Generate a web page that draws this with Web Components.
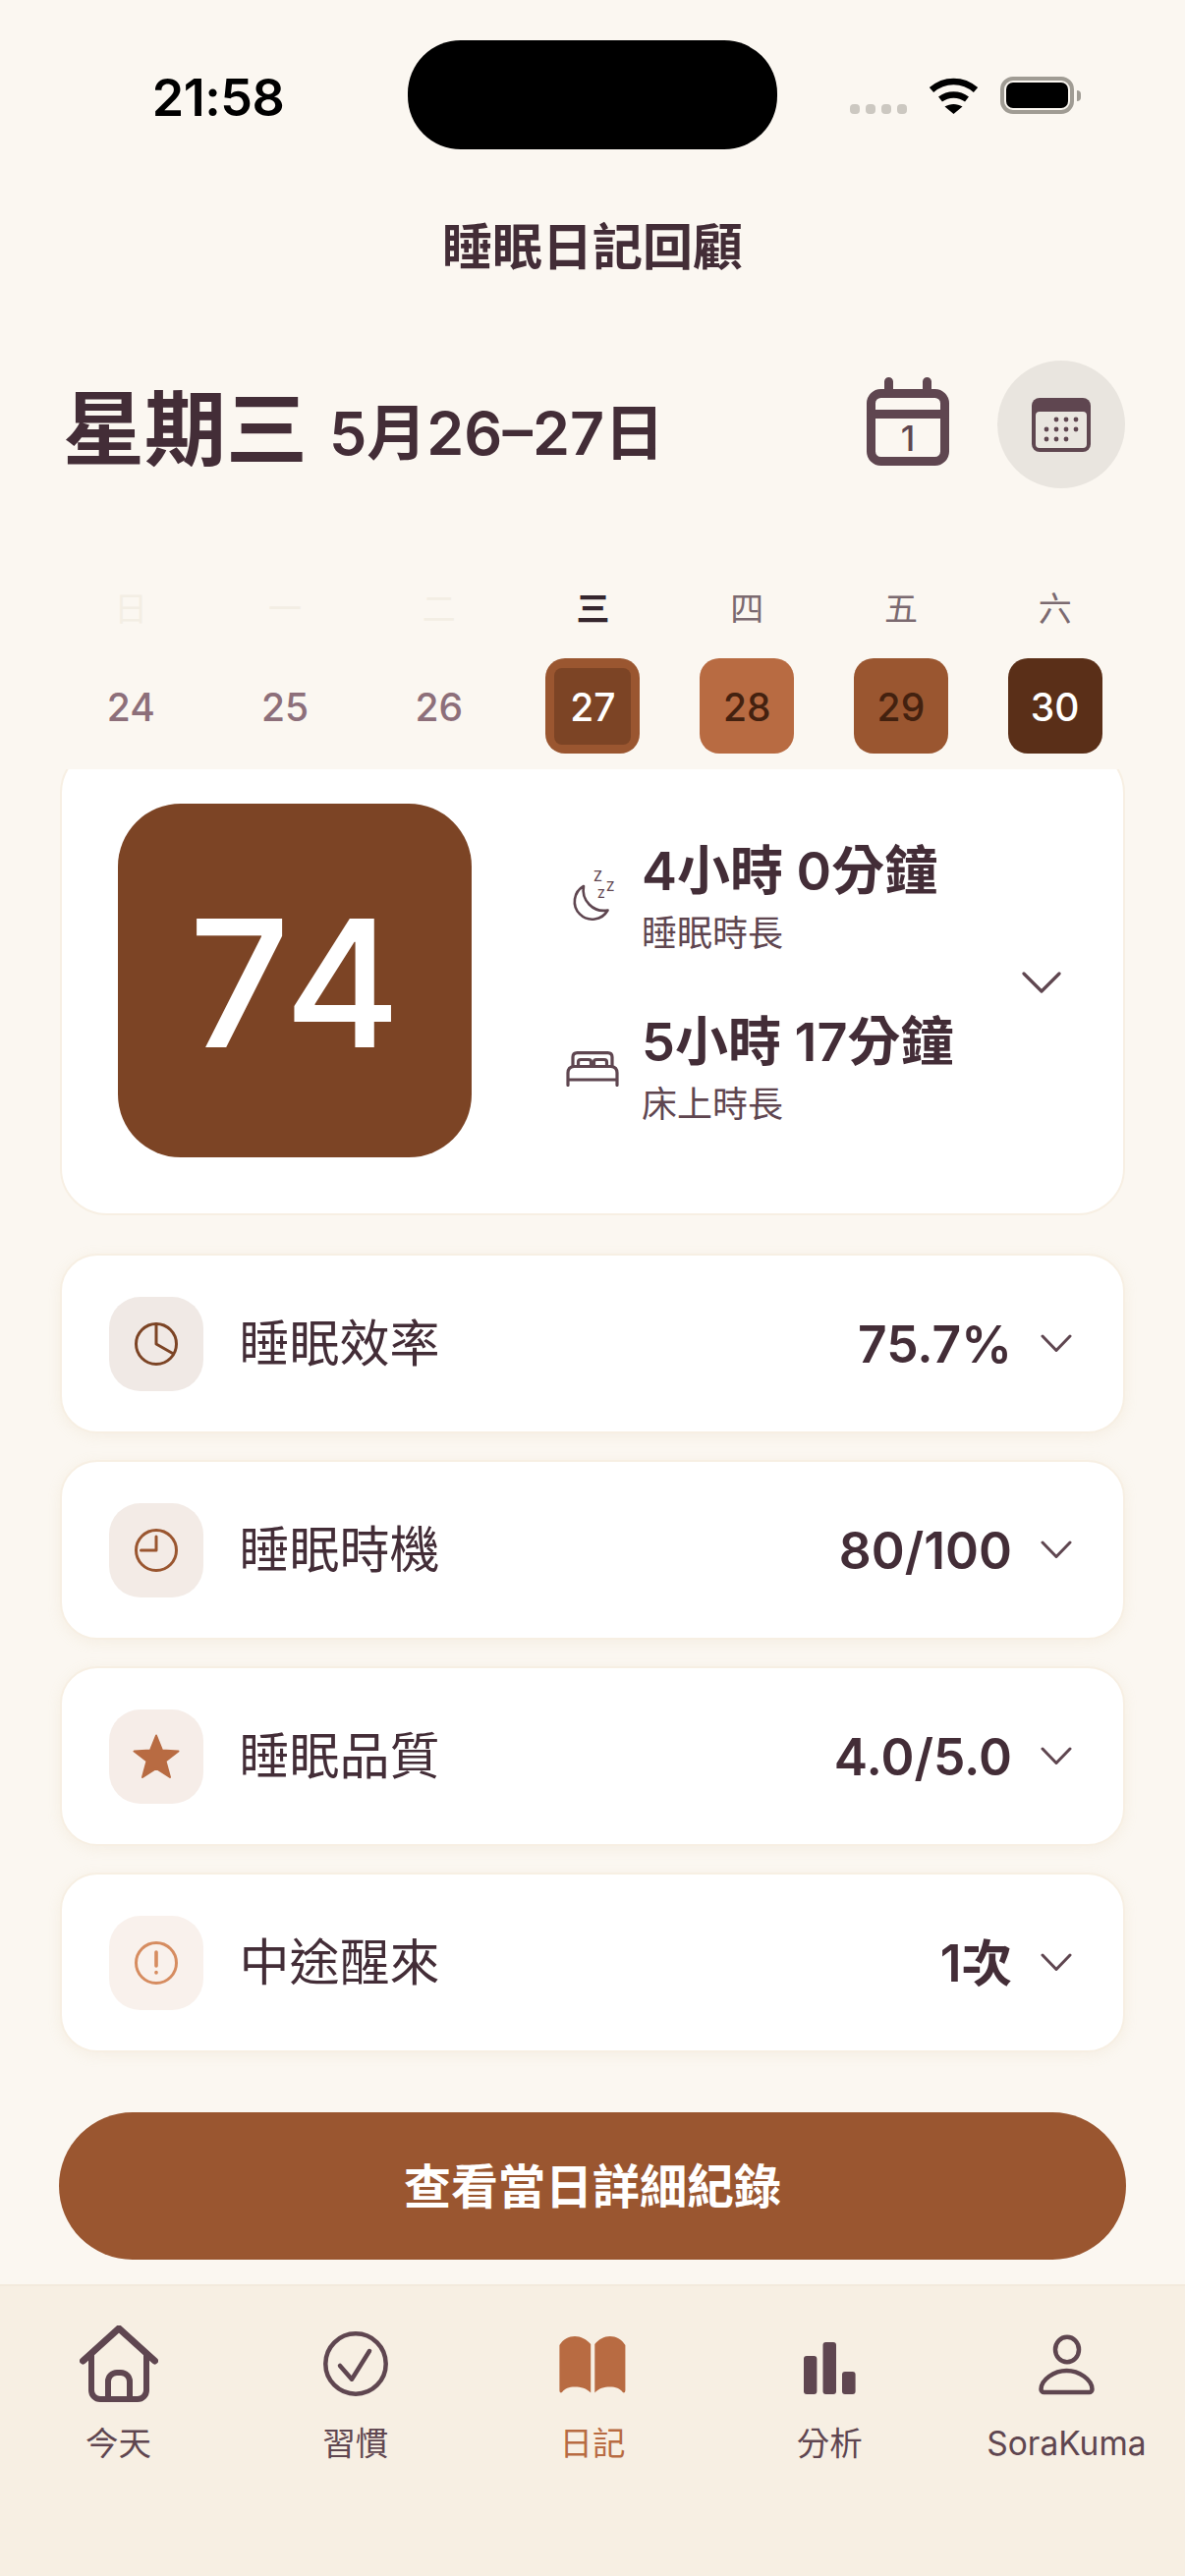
<!DOCTYPE html>
<html lang="zh-Hant">
<head>
<meta charset="utf-8">
<title>睡眠日記回顧</title>
<style>
  html, body { margin: 0; padding: 0; background: #fbf7f1; }
  body { font-family: Inter, "Noto Sans CJK TC", sans-serif; color: #432d37; }
</style>
</head>
<body>
<sleep-app></sleep-app>

<script>
const INK = "#5f4650";

const ICONS = {
  pie: `<circle cx="24" cy="24" r="20.5"/><path d="M24 3.5V24L41.5 34"/>`,
  clock: `<circle cx="24" cy="24" r="20.5"/><path d="M24 10V24H8.5"/>`,
  star: `<path fill="currentColor" stroke-width="2" d="M24 2.5L30 17.5L46.5 18.5L33.5 28.5L38 45L24 36L10 45L14.5 28.5L1.5 18.5L18 17.5Z"/>`,
  alert: `<circle cx="24" cy="24" r="20.5"/><path stroke-width="3.6" d="M24 13V27M24 33.6V34"/>`,
};

class StatusBar extends HTMLElement {
  constructor() {
    super();
    this.attachShadow({ mode: "open" });
    this.shadowRoot.innerHTML = `
    <style>
      :host { display: grid; grid-template-columns: 415px 376px 1fr; height: 151px; padding-top: 41px; }
      .time { font: 600 52px/111px Inter, sans-serif; color: #000; text-align: center; padding: 3px 0 0 29px; letter-spacing: -0.5px; }
      .island { height: 111px; background: #000; border-radius: 54px; }
      .right { display: flex; align-items: flex-start; padding: 37px 0 0 74px; }
      .dots { display: flex; gap: 6px; margin-top: 28px; }
      .dots i { width: 10px; height: 10px; border-radius: 4px; background: #ccc8c1; }
      svg { display: block; margin: 1px 22px 0 22px; }
      .batt { box-sizing: border-box; width: 75px; height: 38px; border: 4px solid #a09c94; border-radius: 13px; padding: 2px; }
      .batt div { height: 100%; background: #000; border-radius: 7px; }
      .nub { width: 4px; height: 11px; margin: 14px 0 0 3px; background: #a09c94; border-radius: 0 4px 4px 0; }
    </style>
    <div class="time">21:58</div>
    <div class="island"></div>
    <div class="right">
      <div class="dots"><i></i><i></i><i></i><i></i></div>
      <svg width="51" height="37" viewBox="0 0 51 37" fill="none" stroke="#000" stroke-width="6.5">
        <path d="M3 12.5C16 1 35 1 48 12.5"/>
        <path d="M12 22C20 16 31 16 39 22"/>
        <path fill="#000" stroke="none" d="M25.5 37L16.5 29.5C22 26 29 26 34.5 29.5Z"/>
      </svg>
      <div class="batt"><div></div></div>
      <div class="nub"></div>
    </div>`;
  }
}

class DayHeader extends HTMLElement {
  constructor() {
    super();
    this.attachShadow({ mode: "open" });
    const dots = [[25,22],[35,22],[45,22],[15,32],[25,32],[35,32],[45,32],[15,42],[25,42],[35,42]]
      .map(([x, y]) => `<circle cx="${x}" cy="${y}" r="2.4"/>`).join("");
    this.shadowRoot.innerHTML = `
    <style>
      :host { display: block; }
      h1 { margin: 30px 0 0; height: 60px; font: 700 51px/60px Inter, "Noto Sans CJK TC", sans-serif; text-align: center; color: #432d37; }
      .row { display: flex; align-items: center; height: 130px; margin-top: 85px; padding: 0 61px 0 64px; }
      .day { font: 700 83px/100px Inter, "Noto Sans CJK TC", sans-serif; color: #432d37; margin-top: 10px; }
      .range { font: 600 61px/100px Inter, "Noto Sans CJK TC", sans-serif; color: #432d37; margin: 18px auto 0 22px; }
      .today { display: block; margin: 0 49px 6px 0; }
      .btn { width: 130px; height: 130px; border-radius: 50%; background: #e9e5df; display: flex; align-items: center; justify-content: center; }
    </style>
    <h1>睡眠日記回顧</h1>
    <div class="row">
      <span class="day">星期三</span>
      <span class="range">5月26–27日</span>
      <svg class="today" width="84" height="90" viewBox="0 0 84 90" fill="none" stroke="${INK}" stroke-width="9" stroke-linecap="round">
        <rect x="4.5" y="16.5" width="75" height="69" rx="10"/>
        <path d="M4.5 37.5H79.5"/>
        <path d="M22.5 4.5V14M61.5 4.5V14"/>
        <text x="42" y="75" text-anchor="middle" fill="${INK}" stroke="none" font-family="Inter, sans-serif" font-size="35" font-weight="500">1</text>
      </svg>
      <div class="btn">
        <svg width="60" height="55" viewBox="0 0 60 55" fill="${INK}">
          <path d="M8 0H52A8 8 0 0 1 60 8V47A8 8 0 0 1 52 55H8A8 8 0 0 1 0 47V8A8 8 0 0 1 8 0Z"/>
          <path fill="#e9e5df" d="M8 14H52A4 4 0 0 1 56 18V47A4 4 0 0 1 52 51H8A4 4 0 0 1 4 47V18A4 4 0 0 1 8 14Z"/>
          ${dots}
        </svg>
      </div>
    </div>`;
  }
}

class WeekDay extends HTMLElement {
  connectedCallback() {
    if (this.shadowRoot) return;
    this.attachShadow({ mode: "open" });
    const bg = this.getAttribute("bg");
    const state = this.getAttribute("state") || "";
    const labelColor = { past: "#f3eee4", today: "#35262e" }[state] || "#7b6a70";
    const labelWeight = state === "today" ? 700 : 400;
    const numColor = this.getAttribute("fg") || "#8d6f7a";
    this.shadowRoot.innerHTML = `
    <style>
      :host { display: flex; flex-direction: column; align-items: center; gap: 30px; }
      .label { height: 40px; font: ${labelWeight} 34px/40px Inter, "Noto Sans CJK TC", sans-serif; color: ${labelColor}; }
      .num { box-sizing: border-box; width: 96px; height: 97px; padding-top: 2px; border-radius: 20px; display: flex; align-items: center; justify-content: center;
        background: ${bg || "transparent"}; font: 500 39px/1 Inter, sans-serif; color: ${numColor}; }
      .inner { width: 78px; height: 78px; margin-top: -2px; padding-top: 2px; box-sizing: border-box; border-radius: 8px; background: #7c4425; display: flex; align-items: center; justify-content: center; }
    </style>
    <div class="label">${this.getAttribute("label")}</div>
    <div class="num">${state === "today" ? `<div class="inner">${this.getAttribute("num")}</div>` : this.getAttribute("num")}</div>`;
  }
}

class WeekStrip extends HTMLElement {
  constructor() {
    super();
    this.attachShadow({ mode: "open" });
    this.shadowRoot.innerHTML = `
    <style>
      :host { display: grid; grid-template-columns: repeat(7, 1fr); padding: 103px 54px 16px 55px; }
    </style>
    <slot></slot>`;
  }
}

class StatRow extends HTMLElement {
  constructor() {
    super();
    this.attachShadow({ mode: "open" });
    this.shadowRoot.innerHTML = `
    <style>
      :host { display: flex; align-items: center; gap: 23px; height: 116px; }
      .ico { width: 54px; height: 60px; display: flex; align-items: center; justify-content: center; color: ${INK}; }
      .value { font: 600 54px/62px Inter, "Noto Sans CJK TC", sans-serif; color: #432d37; white-space: nowrap; }
      .sub { margin-top: 9.5px; font: 400 36px/44px Inter, "Noto Sans CJK TC", sans-serif; color: ${INK}; }
    </style>
    <div class="ico"><slot name="icon"></slot></div>
    <div>
      <div class="value"><slot name="value"></slot></div>
      <div class="sub"><slot name="sub"></slot></div>
    </div>`;
  }
}

class ScoreCard extends HTMLElement {
  constructor() {
    super();
    this.attachShadow({ mode: "open" });
    this.shadowRoot.innerHTML = `
    <style>
      :host { display: flex; align-items: center; box-sizing: border-box; height: 478px; margin-top: -24px;
        padding: 0 63px 0 57px; background: #fff; border: 2px solid #f7efe3; border-radius: 48px; }
      .score { flex: none; box-sizing: border-box; width: 360px; height: 360px; padding: 6px 0 0 5px; border-radius: 64px; background: #7c4425; color: #fff;
        display: flex; align-items: center; justify-content: center; font: 500 180px/1 Inter, sans-serif; letter-spacing: 5px; }
      .stats { display: flex; flex-direction: column; gap: 58px; margin: 6px auto 0 96px; }
      .chev { display: block; flex: none; margin-top: 3px; }
    </style>
    <div class="score"><slot name="score"></slot></div>
    <div class="stats"><slot></slot></div>
    <svg class="chev" width="40" height="22" viewBox="0 0 40 22" fill="none" stroke="${INK}" stroke-width="3.2" stroke-linecap="round" stroke-linejoin="round"><path d="M2 2L20 20L38 2"/></svg>`;
  }
}

class MetricRow extends HTMLElement {
  connectedCallback() {
    if (this.shadowRoot) return;
    this.attachShadow({ mode: "open" });
    const color = this.getAttribute("color");
    const tint = this.getAttribute("tint");
    this.shadowRoot.innerHTML = `
    <style>
      :host { display: flex; align-items: center; box-sizing: border-box; height: 183px; padding: 0 52px 0 48px;
        background: #fff; border: 2px solid #f7efe3; border-radius: 38px; box-shadow: 0 3px 14px rgba(214,190,150,.14); }
      .tile { flex: none; width: 96px; height: 96px; border-radius: 32px; background: ${tint}; color: ${color};
        display: flex; align-items: center; justify-content: center; }
      .name { margin-left: 36.5px; font: 400 51px/60px Inter, "Noto Sans CJK TC", sans-serif; color: #432d37; }
      .val { margin-left: auto; font: 600 51.5px/60px Inter, "Noto Sans CJK TC", sans-serif; color: #432d37; }
      .chev { display: block; flex: none; margin-left: 29px; }
    </style>
    <div class="tile">
      <svg width="48" height="48" viewBox="0 0 48 48" fill="none" stroke="currentColor" stroke-width="3" stroke-linecap="round" stroke-linejoin="round">${ICONS[this.getAttribute("icon")]}</svg>
    </div>
    <div class="name">${this.getAttribute("name")}</div>
    <div class="val">${this.getAttribute("value")}</div>
    <svg class="chev" width="32" height="19" viewBox="0 0 32 19" fill="none" stroke="${INK}" stroke-width="3" stroke-linecap="round" stroke-linejoin="round"><path d="M2 2L16 16.5L30 2"/></svg>`;
  }
}

class CtaButton extends HTMLElement {
  constructor() {
    super();
    this.attachShadow({ mode: "open" });
    this.shadowRoot.innerHTML = `
    <style>
      :host { display: flex; flex: none; align-items: center; justify-content: center; height: 150px; margin: 34px -1px 0; padding-top: 2px; box-sizing: border-box;
        background: #9a5630; border-radius: 75px; font: 600 48px/60px Inter, "Noto Sans CJK TC", sans-serif; color: #fff; }
    </style>
    <slot></slot>`;
  }
}

class TabItem extends HTMLElement {
  connectedCallback() {
    if (this.shadowRoot) return;
    this.attachShadow({ mode: "open" });
    const active = this.hasAttribute("active");
    this.shadowRoot.innerHTML = `
    <style>
      :host { display: flex; flex-direction: column; align-items: center; gap: 20px; color: ${active ? "#b86b42" : INK}; }
      .ico { height: 80px; width: 80px; }
      .label { font: 400 33.5px/40px Inter, "Noto Sans CJK TC", sans-serif; white-space: nowrap; }
    </style>
    <div class="ico"><slot name="icon"></slot></div>
    <div class="label"><slot></slot></div>`;
  }
}

class TabBar extends HTMLElement {
  constructor() {
    super();
    this.attachShadow({ mode: "open" });
    this.shadowRoot.innerHTML = `
    <style>
      :host { display: grid; grid-template-columns: repeat(5, 1fr); box-sizing: border-box; height: 297px; padding-top: 40px;
        background: #f7efe3; border-top: 2px solid #f3eadd; }
    </style>
    <slot></slot>`;
  }
}

class SleepApp extends HTMLElement {
  constructor() {
    super();
    this.attachShadow({ mode: "open" });
    this.shadowRoot.innerHTML = `
    <style>
      :host { display: flex; flex-direction: column; width: 1206px; height: 2622px; overflow: hidden; background: #fbf7f1; }
      .scroll { flex: 1; min-height: 0; overflow: hidden; display: flex; flex-direction: column; gap: 27px; padding: 0 61px; }
      score-card { flex: none; margin-bottom: 12px; }
      metric-row { flex: none; }
      svg { display: block; flex: none; }
    </style>
    <status-bar></status-bar>
    <day-header></day-header>
    <week-strip>
      <week-day label="日" num="24" state="past"></week-day>
      <week-day label="一" num="25" state="past"></week-day>
      <week-day label="二" num="26" state="past"></week-day>
      <week-day label="三" num="27" state="today" bg="#9a5630" fg="#fff"></week-day>
      <week-day label="四" num="28" bg="#b86b42" fg="#43210f"></week-day>
      <week-day label="五" num="29" bg="#9a5630" fg="#43210f"></week-day>
      <week-day label="六" num="30" bg="#5a2f18" fg="#fff"></week-day>
    </week-strip>
    <div class="scroll">
      <score-card>
        <span slot="score">74</span>
        <stat-row>
          <svg slot="icon" width="60" height="60" viewBox="0 2 60 60" fill="none" stroke="currentColor" stroke-width="2.6" stroke-linejoin="round">
            <path d="M21 20A18 18 0 1 0 45.5 44.5A21 21 0 0 1 21 20Z"/>
            <g fill="currentColor" stroke="none" font-family="Inter, sans-serif" font-weight="500">
              <text x="31" y="15" font-size="14">Z</text>
              <text x="44" y="25" font-size="13">Z</text>
              <text x="35" y="32" font-size="12">Z</text>
            </g>
          </svg>
          <span slot="value">4小時 0分鐘</span>
          <span slot="sub">睡眠時長</span>
        </stat-row>
        <stat-row>
          <svg slot="icon" width="54" height="36" viewBox="0 0 54 36" fill="none" stroke="currentColor" stroke-width="3.2" stroke-linecap="round" stroke-linejoin="round">
            <path d="M2 34.5V22Q2 16 8 15.5H46Q52 16 52 22V34.5M2 29H52"/>
            <path d="M7 15V6Q7 1.6 11.5 1.6H42.5Q47 1.6 47 6V15"/>
            <path d="M12.5 15V11Q12.5 8.5 15 8.5H23Q25.5 8.5 25.5 11V15M28.5 15V11Q28.5 8.5 31 8.5H39Q41.5 8.5 41.5 11V15"/>
          </svg>
          <span slot="value">5小時 17分鐘</span>
          <span slot="sub">床上時長</span>
        </stat-row>
      </score-card>
      <metric-row icon="pie" name="睡眠效率" value="75.7%" color="#7c4425" tint="#f0e9e5"></metric-row>
      <metric-row icon="clock" name="睡眠時機" value="80/100" color="#9a5630" tint="#f3ebe6"></metric-row>
      <metric-row icon="star" name="睡眠品質" value="4.0/5.0" color="#b86b42" tint="#f6ede8"></metric-row>
      <metric-row icon="alert" name="中途醒來" value="1次" color="#d68c60" tint="#f9f1ec"></metric-row>
      <cta-button>查看當日詳細紀錄</cta-button>
    </div>
    <tab-bar>
      <tab-item>
        <svg slot="icon" width="80" height="80" viewBox="0 0 80 80" fill="none" stroke="currentColor" stroke-width="6" stroke-linecap="round" stroke-linejoin="round">
          <path stroke-width="7" d="M3.5 36L40 3L76.5 36"/>
          <path d="M12 30V66A9 9 0 0 0 21 75H59A9 9 0 0 0 68 66V30"/>
          <path d="M29 75V57A9 9 0 0 1 38 48H42A9 9 0 0 1 51 57V75"/>
        </svg>
        今天
      </tab-item>
      <tab-item>
        <svg slot="icon" width="80" height="80" viewBox="0 0 80 80" fill="none" stroke="currentColor" stroke-width="4.5" stroke-linecap="round" stroke-linejoin="round">
          <circle cx="40" cy="39" r="30.7"/>
          <path d="M24 41L36 54.7L54 26"/>
        </svg>
        習慣
      </tab-item>
      <tab-item active>
        <svg slot="icon" width="80" height="80" viewBox="0 0 80 80" fill="currentColor">
          <path d="M6.4 20C10 14 16 11 22 11C28 11 34 14 38.2 19V68.5C34 64 28 62.5 22 62.5C16 62.5 12 64 9 68C8 69 6.4 68.5 6.4 66Z"/>
          <path d="M73.4 20C69.8 14 63.8 11 57.8 11C51.8 11 46.4 14 42.3 19V68.5C46.4 64 51.8 62.5 57.8 62.5C63.8 62.5 67.8 64 70.8 68C71.8 69 73.4 68.5 73.4 66Z"/>
        </svg>
        日記
      </tab-item>
      <tab-item>
        <svg slot="icon" width="80" height="80" viewBox="0 0 80 80" fill="currentColor">
          <rect x="14" y="31" width="13.4" height="39" rx="3"/>
          <rect x="33.5" y="17" width="13.5" height="53" rx="3"/>
          <rect x="53" y="47" width="13.6" height="23" rx="3"/>
        </svg>
        分析
      </tab-item>
      <tab-item>
        <svg slot="icon" width="80" height="80" viewBox="0 0 80 80" fill="none" stroke="currentColor" stroke-width="4.5" stroke-linejoin="round">
          <ellipse cx="41" cy="24.5" rx="12" ry="12.7"/>
          <path d="M40.5 46C28 46 14.5 55 14.5 65A3 3 0 0 0 17.5 68H63.5A3 3 0 0 0 66.5 65C66.5 55 53 46 40.5 46Z"/>
        </svg>
        SoraKuma
      </tab-item>
    </tab-bar>`;
  }
}

customElements.define("status-bar", StatusBar);
customElements.define("day-header", DayHeader);
customElements.define("week-strip", WeekStrip);
customElements.define("week-day", WeekDay);
customElements.define("stat-row", StatRow);
customElements.define("score-card", ScoreCard);
customElements.define("metric-row", MetricRow);
customElements.define("cta-button", CtaButton);
customElements.define("tab-item", TabItem);
customElements.define("tab-bar", TabBar);
customElements.define("sleep-app", SleepApp);
</script>
</body>
</html>
